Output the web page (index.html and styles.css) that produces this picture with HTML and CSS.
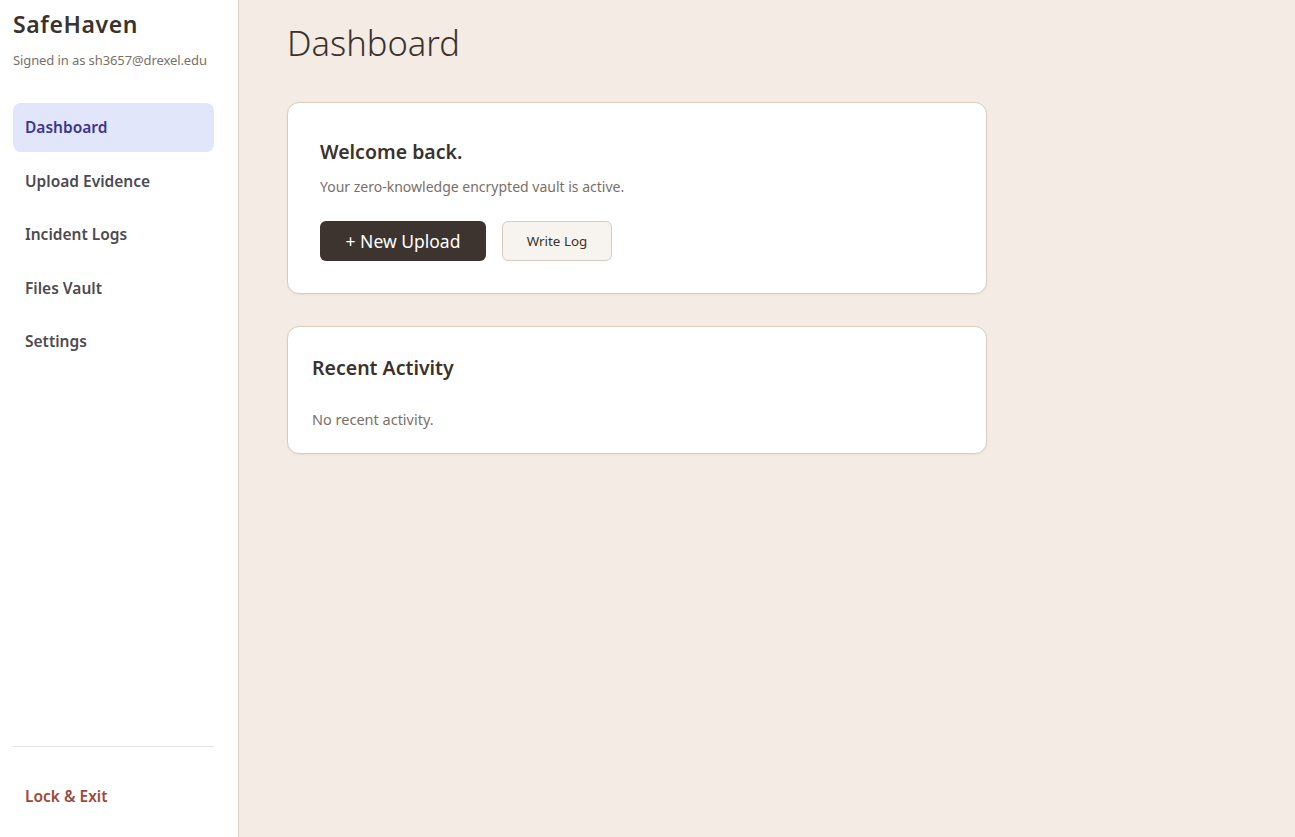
FILE: index.html
```html
<!DOCTYPE html>
<html>
<head>
<meta charset="utf-8">
<title>SafeHaven</title>
<link rel="stylesheet" href="styles.css">
</head>
<body>
<div class="app">
  <aside class="sidebar">
    <div class="brand">
      <div class="brand-name">SafeHaven</div>
      <div class="brand-user">Signed in as sh3657@drexel.edu</div>
    </div>
    <nav class="nav">
      <a class="nav-item active">Dashboard</a>
      <a class="nav-item">Upload Evidence</a>
      <a class="nav-item">Incident Logs</a>
      <a class="nav-item">Files Vault</a>
      <a class="nav-item">Settings</a>
    </nav>
    <div class="sidebar-footer">
      <a class="nav-item exit">Lock &amp; Exit</a>
    </div>
  </aside>
  <main class="main">
    <h1 class="page-title">Dashboard</h1>
    <section class="card card-welcome">
      <h2 class="card-title">Welcome back.</h2>
      <p class="card-sub">Your zero-knowledge encrypted vault is active.</p>
      <div class="actions">
        <button class="btn btn-primary">+ New Upload</button>
        <button class="btn btn-secondary">Write Log</button>
      </div>
    </section>
    <section class="card card-activity">
      <h2 class="card-title">Recent Activity</h2>
      <p class="empty">No recent activity.</p>
    </section>
  </main>
</div>
</body>
</html>
```
FILE: styles.css
```css
* { box-sizing: border-box; }
html, body { margin: 0; height: 100%; }
body {
  font-family: "Noto Sans", "Open Sans", sans-serif;
  color: #3b322d;
  background: #f3ebe4;
}
.app { display: flex; height: 100vh; }
.sidebar {
  width: 239px;
  flex: 0 0 239px;
  background: #ffffff;
  border-right: 1px solid #ddd2c6;
  padding: 8px 24px 16px 13px;
  display: flex;
  flex-direction: column;
}
.brand { padding-bottom: 35px; }
.brand-name {
  font-size: 23px;
  font-weight: 600;
  letter-spacing: 0.6px;
  color: #3b322d;
  line-height: 32px;
}
.brand-user {
  margin-top: 12px;
  font-size: 13px;
  color: #7b6f68;
  line-height: 16px;
  letter-spacing: -0.1px;
}
.nav { display: flex; flex-direction: column; gap: 4.5px; }
.nav-item {
  display: block;
  height: 49px;
  line-height: 49px;
  padding: 0 12px;
  border-radius: 8px;
  font-size: 15.5px;
  font-weight: 600;
  color: #4d4a52;
  text-decoration: none;
}
.nav-item.active { background: #e1e6fa; color: #3c3590; }
.sidebar-footer {
  margin-top: auto;
  border-top: 1px solid #e6e4ea;
  padding-top: 25px;
}
.nav-item.exit { color: #9c4a3c; }
.main { flex: 1; padding: 20px 48px; }
.page-title {
  margin: 0 0 36px;
  font-size: 34.5px;
  font-weight: 300;
  line-height: 46px;
  color: #3b322d;
}
.card {
  width: 700px;
  background: #ffffff;
  border: 1px solid #d9ccbf;
  border-radius: 12px;
  box-shadow: 0 1px 2px rgba(80, 60, 40, 0.06);
}
.card-welcome { padding: 36px 32px 32px; }
.card-activity { margin-top: 32px; padding: 28px 24px 24px; }
.card-title {
  margin: 0;
  font-size: 19.5px;
  font-weight: 600;
  line-height: 26px;
  color: #3b322d;
}
.card-sub {
  margin: 12px 0 24px;
  font-size: 14px;
  color: #7b6f68;
  line-height: 20px;
}
.actions { display: flex; gap: 16px; }
.btn {
  font-family: inherit;
  height: 40px;
  border-radius: 6px;
  cursor: pointer;
}
.btn-primary {
  width: 166px;
  background: #3d3430;
  border: none;
  color: #ffffff;
  font-size: 17.5px;
}
.btn-secondary {
  width: 110px;
  background: #f7f3ee;
  border: 1px solid #d9ccbf;
  color: #3b322d;
  font-size: 13.4px;
}
.empty {
  margin: 28px 0 0;
  font-size: 14.5px;
  color: #7b6f68;
  line-height: 20px;
}
```
